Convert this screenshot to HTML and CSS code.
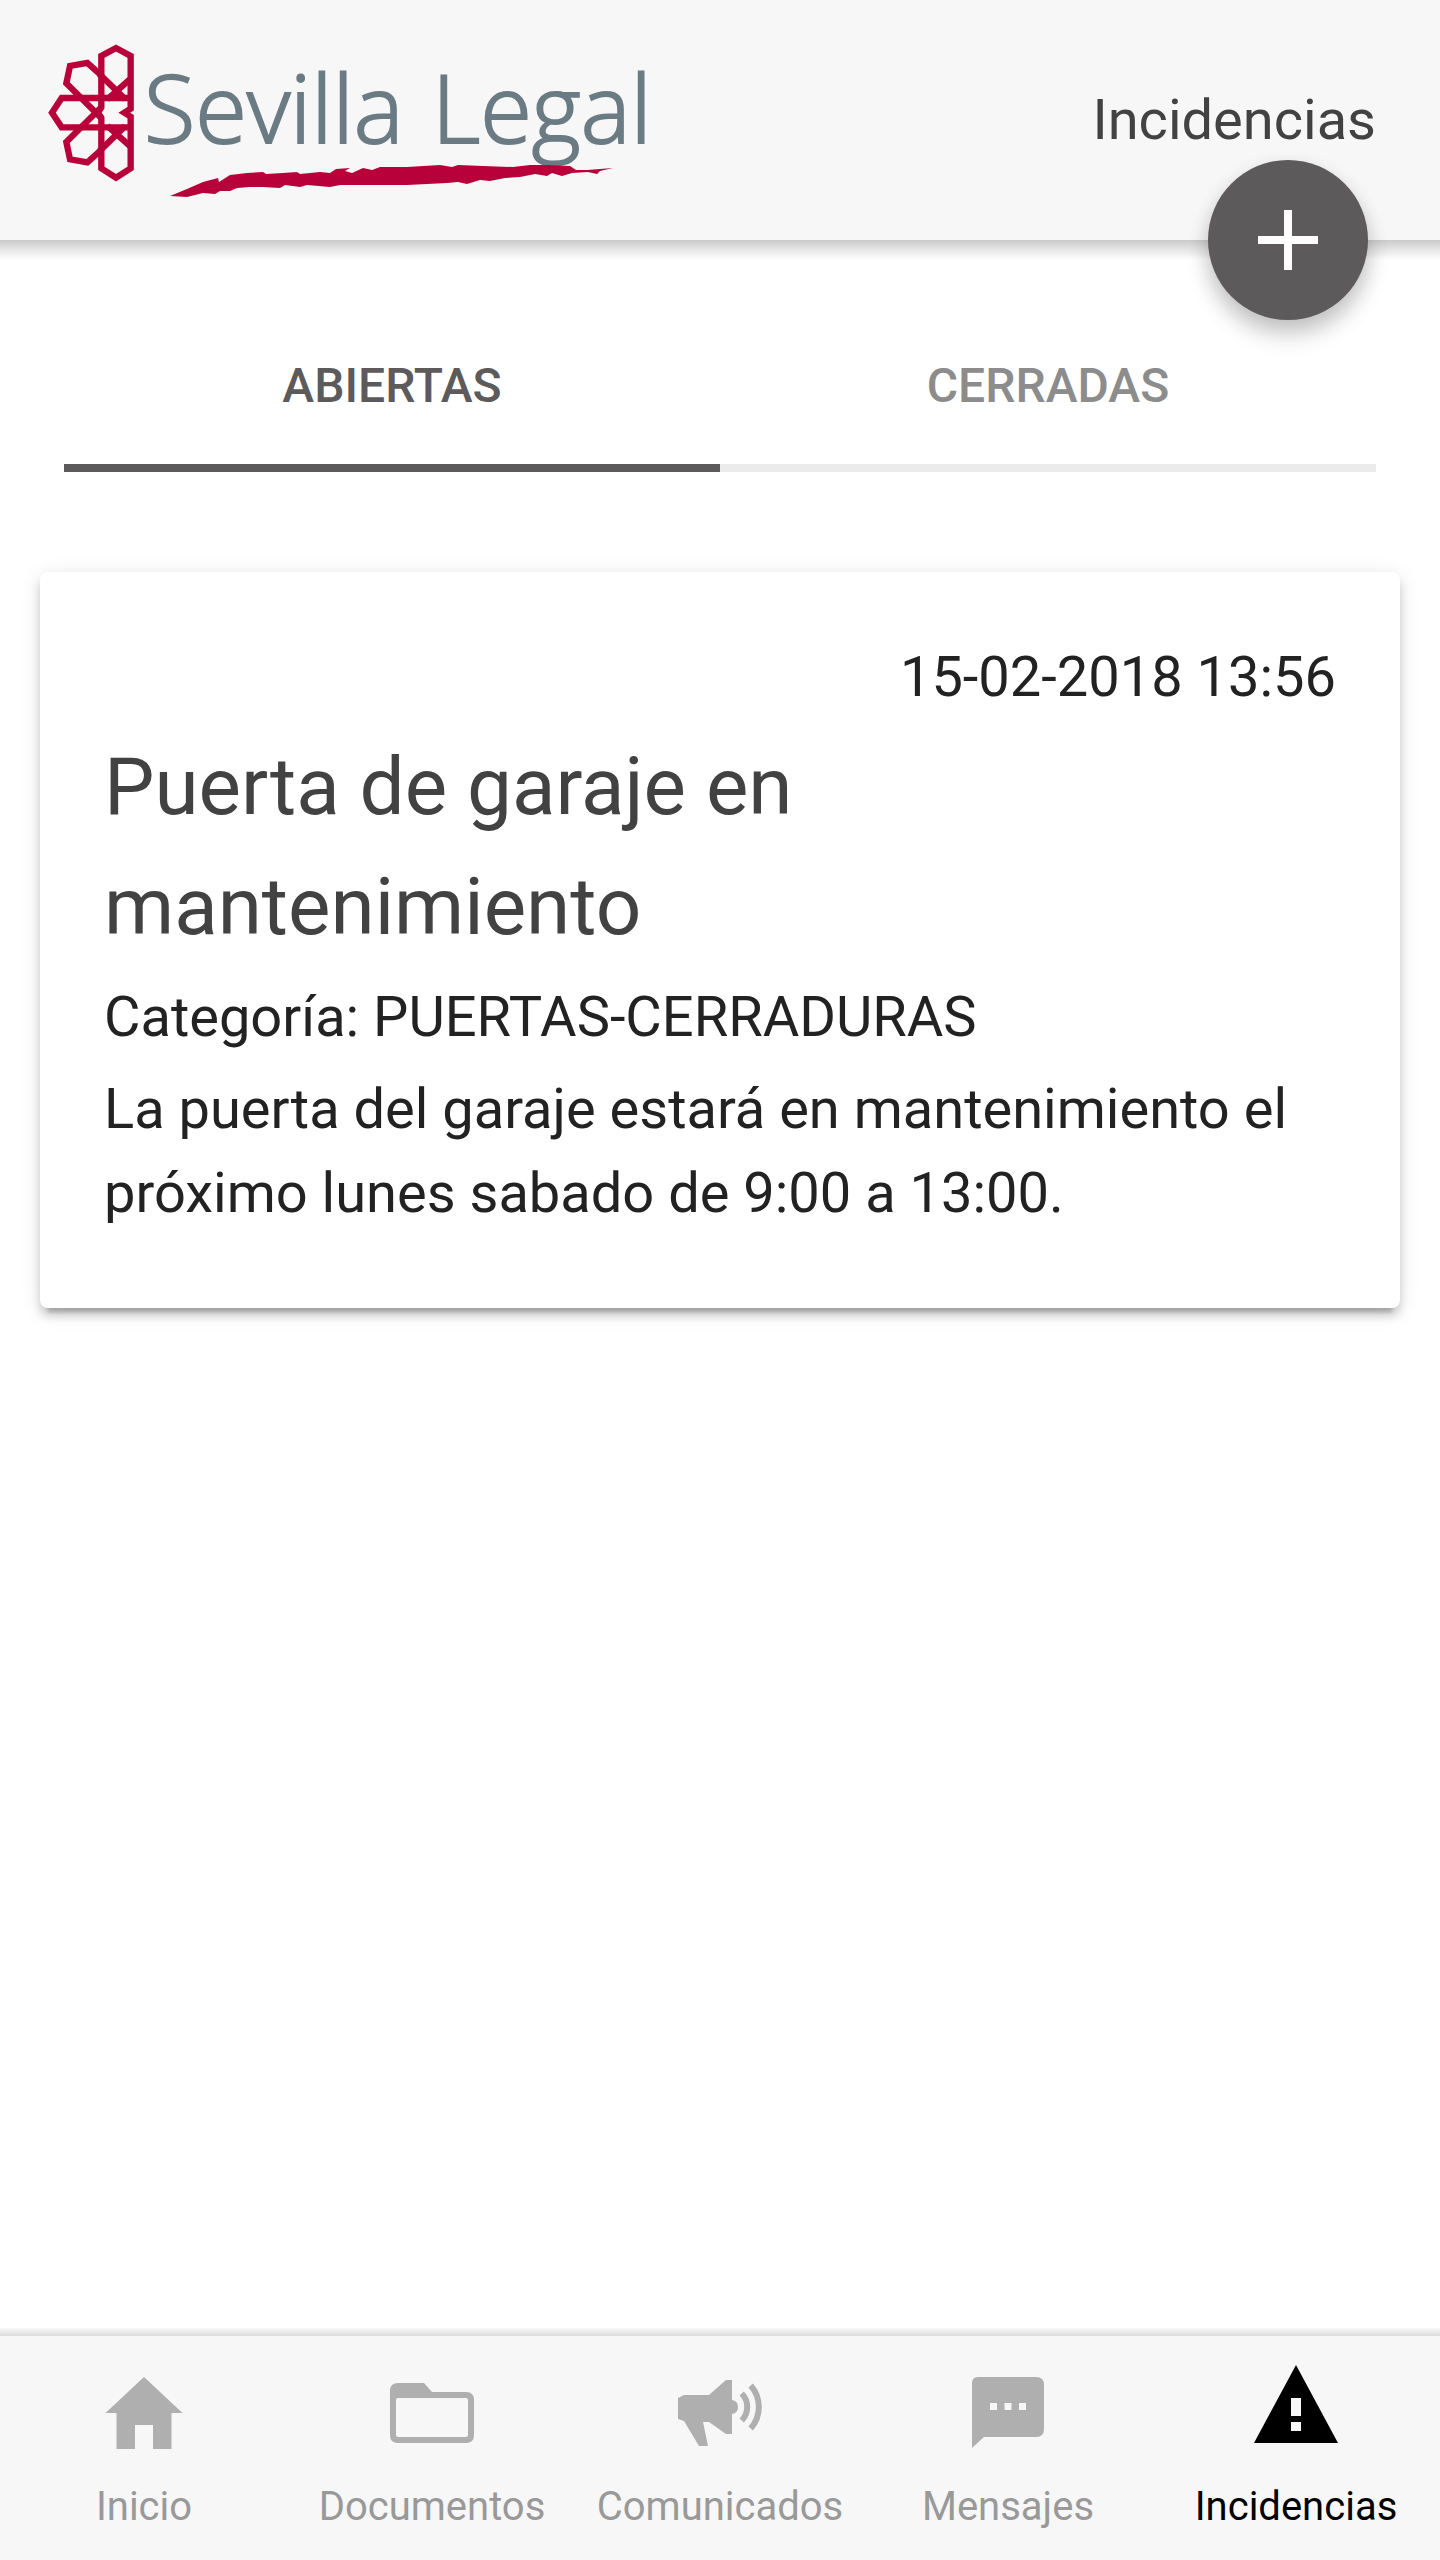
FILE: index.html
```html
<!DOCTYPE html>
<html lang="es">
<head>
    <meta charset="UTF-8">
    <meta name="viewport" content="width=device-width, initial-scale=1.0">
    <title>Sevilla Legal - Incidencias</title>
    <link rel="stylesheet" href="styles.css">
</head>
<body>
    <header class="toolbar">
        <svg class="logo" viewBox="40 32 616 176" role="img" aria-label="Sevilla Legal">
            <g class="rosette" transform="translate(30 30) scale(0.3333)">
                <path d="M214 232V78L258 54L302 78V236L283 248L302 260V415L258 443L214 415V264L204 248Z"/>
                <path d="M302 204H95L66 248L95 292H302"/>
                <path d="M214 136L172 99L120 108L109 160L214 264"/>
                <path d="M214 360L172 397L120 388L109 336L214 232"/>
                <path d="M208 132L286 208M302 146L232 208"/>
                <path d="M208 364L286 288M302 350L232 288"/>
            </g>
            <text class="logo-text" x="144" y="143">Sevilla</text>
            <text class="logo-text" x="432" y="143">Legal</text>
            <path class="brush" d="M170 196L187 189L203 182L218 178L219 182L230 175L247 173L263 172L266 174L283 173L297 172L300 174L320 172L330 173L336 169L350 168L345 171L352 173L363 168L372 170L380 167L407 167L440 165L452 167L458 165L483 166L513 167L530 165L547 165L570 166L576 170L587 170L600 169L613 168L600 171L597 174L588 172L572 173L562 176L552 173L547 176L535 174L520 177L505 178L490 181L480 180L467 184L458 182L447 183L407 185L373 185L340 185L330 187L307 185L300 187L285 185L280 188L263 187L250 187L237 188L230 191L220 191L215 194L203 193L187 197Z"/>
        </svg>
        <h1>Incidencias</h1>
        <button class="fab" type="button" aria-label="Nueva incidencia">
            <svg viewBox="0 0 60 60"><path d="M26 0h8v26h26v8H34v26h-8V34H0v-8h26z"/></svg>
        </button>
    </header>

    <main>
        <div class="segment">
            <button class="segment-button active" type="button">ABIERTAS</button>
            <button class="segment-button" type="button">CERRADAS</button>
        </div>

        <article class="card">
            <time datetime="2018-02-15T13:56">15-02-2018 13:56</time>
            <h2>Puerta de garaje en mantenimiento</h2>
            <p>Categoría: PUERTAS-CERRADURAS</p>
            <p>La puerta del garaje estará en mantenimiento el próximo lunes sabado de 9:00 a 13:00.</p>
        </article>
    </main>

    <nav class="tabs">
        <a href="#inicio">
            <svg viewBox="0 0 96 96"><path d="M48 13L86.500 49H75.500V85H57V61H39V85H20.500V49H9.500z"/></svg>
            <span>Inicio</span>
        </a>
        <a href="#documentos">
            <svg viewBox="0 0 96 96"><path fill-rule="evenodd" d="M14 19H40L48 28H82Q90 28 90 36V71Q90 79 82 79H14Q6 79 6 71V27Q6 19 14 19zM14 34Q12 34 12 36V71Q12 73 14 73H82Q84 73 84 71V36Q84 34 82 34z"/></svg>
            <span>Documentos</span>
        </a>
        <a href="#comunicados">
            <svg viewBox="0 0 96 96">
                <path d="M6 34L12 31H37L54 16H60V36Q66 37 66 43T60 50V70H54L37 58H31L36 82H27L12 57L6 55z"/>
                <path class="wave" d="M69.700 29.500A19.300 19.300 0 0 1 69.700 56.500M78.700 21.500A32.500 32.500 0 0 1 78.700 64.500"/>
            </svg>
            <span>Comunicados</span>
        </a>
        <a href="#mensajes">
            <svg viewBox="0 0 96 96"><path fill-rule="evenodd" d="M18 13H76Q84 13 84 21V65Q84 73 76 73H24L12 84V19Q12 13 18 13zM30 39V46H37V39zM44.500 39V46H51.500V39zM59 39V46H66V39z"/></svg>
            <span>Mensajes</span>
        </a>
        <a class="active" href="#incidencias">
            <svg viewBox="0 0 96 96"><path fill-rule="evenodd" d="M48 1L90 79H6zM43 34V52H53V34zM43 58V67H53V58z"/></svg>
            <span>Incidencias</span>
        </a>
    </nav>
</body>
</html>
```

FILE: styles.css
```css
* {
    box-sizing: border-box;
}
body {
    display: flex;
    flex-direction: column;
    min-height: 100vh;
    margin: 0;
    background-color: #fff;
    font-family: Roboto, sans-serif;
    font-size: 56px;
    line-height: 84px;
    color: #222;
}
h1, h2, p {
    margin: 0;
    font-weight: 400;
}
button {
    padding: 0;
    border: none;
    background: none;
    font-family: inherit;
    cursor: pointer;
}

/* header */
.toolbar {
    position: relative;
    display: flex;
    align-items: center;
    justify-content: space-between;
    padding: 32px 64px 32px 40px;
    background-color: #f7f7f7;
}
.toolbar::after {
    content: "";
    position: absolute;
    top: 100%;
    left: 0;
    width: 100%;
    height: 20px;
    background: linear-gradient(#cacaca, #e4e4e4 45%, #fff);
}
.toolbar h1 {
    font-size: 56px;
    color: #424242;
}
.logo {
    width: 616px;
    height: 176px;
}
.rosette {
    fill: none;
    stroke: #b8003a;
    stroke-width: 19;
}
.logo-text {
    font-family: "Open Sans", sans-serif;
    font-size: 94px;
    font-weight: 300;
    fill: #6b7b84;
    stroke: #6b7b84;
    stroke-width: 2;
}
.brush {
    fill: #b8003a;
}
.fab {
    position: absolute;
    z-index: 1;
    right: 72px;
    bottom: -80px;
    display: flex;
    align-items: center;
    justify-content: center;
    width: 160px;
    height: 160px;
    border-radius: 50%;
    background-color: #5c5a5b;
    box-shadow: 0 16px 24px rgba(0, 0, 0, 0.14), 0 8px 20px rgba(0, 0, 0, 0.14);
}
.fab svg {
    width: 60px;
    height: 60px;
    fill: #fff;
}

/* content */
main {
    flex: 1;
    padding: 64px 40px;
}
.segment {
    display: flex;
    margin: 0 24px 100px;
}
.segment-button {
    flex: 1;
    height: 168px;
    padding-top: 2px;
    border-bottom: 8px solid #ebebeb;
    font-size: 48px;
    font-weight: 500;
    color: #8d8c8c;
}
.segment-button.active {
    border-color: #5c5a5b;
    color: #5c5a5b;
}
.card {
    display: flex;
    flex-direction: column;
    gap: 8px;
    padding: 63px 64px 73px;
    border-radius: 8px;
    background-color: #fff;
    box-shadow: 0 8px 8px rgba(0, 0, 0, 0.14), 0 12px 4px -8px rgba(0, 0, 0, 0.2), 0 4px 20px rgba(0, 0, 0, 0.12);
}
.card time {
    text-align: right;
}
.card h2 {
    font-size: 80px;
    line-height: 120px;
    color: #424242;
}

/* bottom tabs */
.tabs {
    position: relative;
    display: flex;
    background-color: #f7f7f7;
}
.tabs::before {
    content: "";
    position: absolute;
    bottom: 100%;
    left: 0;
    width: 100%;
    height: 8px;
    background: linear-gradient(#f8f8f8, #dcdcdc);
}
.tabs a {
    display: flex;
    flex: 1 1 0;
    flex-direction: column;
    align-items: center;
    gap: 20px;
    min-width: 0;
    padding: 28px 0 26px;
    font-size: 40px;
    line-height: 54px;
    color: #999;
    text-decoration: none;
}
.tabs svg {
    width: 96px;
    height: 96px;
    fill: #afafaf;
}
.tabs .wave {
    fill: none;
    stroke: #afafaf;
    stroke-width: 6;
}
.tabs .active {
    color: #000;
}
.tabs .active svg {
    fill: #000;
}
```
